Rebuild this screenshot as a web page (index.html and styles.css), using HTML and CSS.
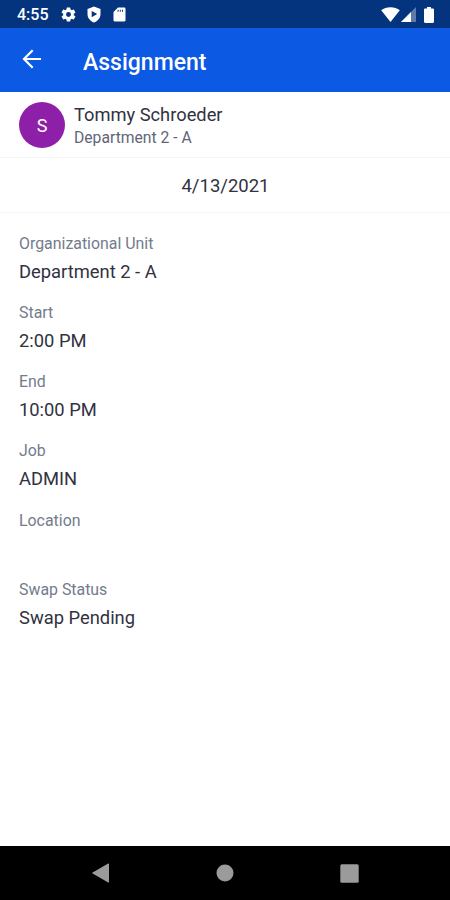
FILE: index.html
```html
<!DOCTYPE html>
<html lang="en">
<head>
<meta charset="utf-8">
<title>Assignment</title>
<link rel="stylesheet" href="styles.css">
</head>
<body>
<div class="screen">
  <div class="status-bar">
    <span class="clock">4:55</span>
    <svg class="icon-gear" width="17" height="17" viewBox="0 0 24 24" fill="#fff"><path fill-rule="evenodd" d="M19.43 12.98c.04-.32.07-.64.07-.98s-.03-.66-.07-.98l2.11-1.65c.19-.15.24-.42.12-.64l-2-3.46c-.12-.22-.39-.3-.61-.22l-2.49 1c-.52-.4-1.080-.73-1.690-.98l-.38-2.650A.488.488 0 0 0 14 2h-4c-.25 0-.46.18-.49.42l-.38 2.650c-.61.25-1.170.59-1.690.98l-2.490-1c-.23-.09-.49 0-.61.22l-2 3.460c-.13.22-.07.49.12.64l2.110 1.650c-.04.32-.07.65-.07.98s.03.66.07.98l-2.110 1.650c-.19.15-.24.42-.12.64l2 3.460c.12.22.39.3.61.22l2.490-1c.52.4 1.080.73 1.690.98l.38 2.650c.03.24.24.42.49.42h4c.25 0 .46-.18.49-.42l.38-2.650c.61-.25 1.170-.59 1.690-.98l2.490 1c.23.09.49 0 .61-.22l2-3.460c.12-.22.07-.49-.12-.64l-2.110-1.650zM12 15.500a3.500 3.500 0 1 1 0-7 3.500 3.500 0 0 1 0 7z"/></svg>
    <svg class="icon-shield" width="14" height="17" viewBox="0 0 14 17" fill="#fff"><path fill-rule="evenodd" d="M7 .5 13.500 3v5.300c0 3.700-2.800 7-6.500 8.200C3.300 15.300.5 12 .5 8.300V3zM4.700 4.900v6.400L10.200 8z"/></svg>
    <svg class="icon-card" width="13" height="15" viewBox="0 0 13 15" fill="#fff"><path fill-rule="evenodd" d="M5 .5h6.300c.7 0 1.200.5 1.200 1.200v11.600c0 .7-.5 1.200-1.200 1.200H1.700c-.7 0-1.200-.5-1.200-1.200V5zM4.600 2.800v2h1V2.800zm2.200 0v2h1V2.800zm2.200 0v2h1V2.800z"/></svg>
    <svg class="icon-wifi" width="19" height="15" viewBox="0 0 19 15" fill="#fff"><path d="M9.500 15 .2 3.300C2.700 1.400 5.900.3 9.500.3s6.800 1.100 9.300 3z"/></svg>
    <svg class="icon-signal" width="15" height="15" viewBox="0 0 15 15"><path fill="#fff" fill-opacity=".35" d="M0 15 15 0v15z"/><path fill="#fff" d="M0 15 10 5v10z"/></svg>
    <svg class="icon-battery" width="10" height="16" viewBox="0 0 10 16" fill="#fff"><path d="M3 0h4v1.600h1.800c.7 0 1.200.5 1.200 1.200v12c0 .7-.5 1.200-1.200 1.200H1.200C.5 16 0 15.500 0 14.800v-12c0-.7.5-1.200 1.200-1.200H3z"/></svg>
  </div>
  <header class="app-bar">
    <svg class="back" width="20" height="20" viewBox="0 0 20 20" fill="none" stroke="#fff" stroke-width="2.200"><path d="M19 10H2M10.700 1.200 2 10l8.700 8.800"/></svg>
    <h1 class="title">Assignment</h1>
  </header>
  <section class="person">
    <div class="avatar">S</div>
    <div class="person-text">
      <div class="name">Tommy Schroeder</div>
      <div class="department">Department 2 - A</div>
    </div>
  </section>
  <div class="date">4/13/2021</div>
  <dl class="fields">
    <div class="field"><dt>Organizational Unit</dt><dd>Department 2 - A</dd></div>
    <div class="field"><dt>Start</dt><dd>2:00 PM</dd></div>
    <div class="field"><dt>End</dt><dd>10:00 PM</dd></div>
    <div class="field"><dt>Job</dt><dd>ADMIN</dd></div>
    <div class="field"><dt>Location</dt><dd></dd></div>
    <div class="field"><dt>Swap Status</dt><dd>Swap Pending</dd></div>
  </dl>
  <nav class="nav-bar">
    <svg width="18" height="20" viewBox="0 0 18 20" fill="#9b9b9b"><path d="M.6 9.400 16.200.6q.8-.4.800.5v17.800q0 .9-.8.500L.6 10.600q-1-.6 0-1.200z"/></svg>
    <svg width="18" height="18" viewBox="0 0 18 18" fill="#9b9b9b"><circle cx="9" cy="9" r="8.500"/></svg>
    <svg width="19" height="19" viewBox="0 0 19 19" fill="#9b9b9b"><rect x=".3" y=".3" width="18.400" height="18.400" rx="1.500"/></svg>
  </nav>
</div>
</body>
</html>
```

FILE: styles.css
```css
* { box-sizing: border-box; }
body { margin: 0; font-family: Roboto, sans-serif; background: #fff; color: #32323f; }
.screen { width: 450px; height: 900px; display: flex; flex-direction: column; }
.status-bar { height: 28px; flex: none; background: #05347f; color: #fff; display: flex; align-items: center; padding: 1px 16px 0 17px; }
.clock { font-size: 16px; font-weight: 500; width: 43px; line-height: 20px; padding-top: 1px; }
.icon-shield { margin-left: 10px; }
.icon-card { margin-left: 12px; }
.icon-wifi { margin-left: auto; }
.icon-signal { margin-left: 1px; }
.icon-battery { margin-left: 8px; }
.app-bar { height: 64px; flex: none; background: #0c59e4; color: #fff; display: flex; align-items: center; padding: 0 22px; }
.back { margin-bottom: 2px; }
.title { margin: 5px 0 0 41px; font-size: 23px; font-weight: 500; line-height: 30px; }
.person { height: 66px; flex: none; display: flex; align-items: center; padding: 0 19px; border-bottom: 1px solid #f3f4f5; }
.avatar { width: 46px; height: 46px; border-radius: 50%; background: #8e1fa9; color: #fff; display: flex; align-items: center; justify-content: center; font-size: 18px; padding-top: 2px; }
.person-text { margin-left: 9px; padding-top: 2px; }
.name { font-size: 18.300px; line-height: 24px; }
.department { font-size: 15.700px; line-height: 22px; color: #5f6678; }
.date { height: 55px; flex: none; display: flex; align-items: center; justify-content: center; font-size: 18.500px; padding: 2px 0 0 1px; border-bottom: 1px solid #f3f4f5; }
.fields { margin: 0; padding: 19px 19px 0; flex: 1; }
.field { height: 69.150px; }
dt { font-size: 15.900px; line-height: 24px; color: #747b8c; }
dd { margin: 0; font-size: 18.350px; line-height: 32px; }
.nav-bar { height: 54px; flex: none; background: #000; display: flex; align-items: center; justify-content: space-between; padding: 0 91px 0 92px; }
```
